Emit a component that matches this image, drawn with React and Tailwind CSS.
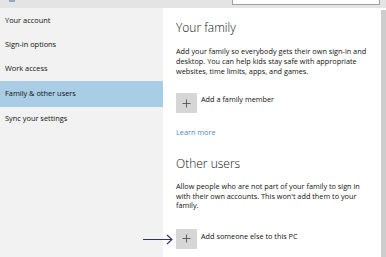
import React from "react";

const navItems = [
  "Your account",
  "Sign-in options",
  "Work access",
  "Family & other users",
  "Sync your settings",
];

const PlusTile = () => (
  <div className="w-[21px] h-[20px] bg-[#d6d6d6] flex items-center justify-center shrink-0">
    <svg width="9" height="9" viewBox="0 0 9 9">
      <path d="M4.5 0.5v8M0.5 4.5h8" stroke="#555" strokeWidth="0.9" fill="none" />
    </svg>
  </div>
);

const App = () => {
  return (
    <div
      className="relative w-[386px] h-[257px] overflow-hidden bg-white text-[#111]"
      style={{ fontFamily: '"Open Sans", "Noto Sans", sans-serif' }}
    >
      {/* top strip with search box */}
      <div className="h-[8px] bg-[#e4e4e4] flex items-start">
        <div className="ml-[9px] w-[6px] h-[2px] bg-[#8fa9c4]" />
        <div className="ml-[217px] w-[148px] h-[5px] bg-white border border-t-0 border-[#a0a0a0]" />
      </div>

      <div className="flex h-[249px]">
        {/* sidebar */}
        <div className="w-[163px] bg-[#f2f2f2] pt-[1px] flex flex-col">
          {navItems.map((item, i) => (
            <div
              key={item}
              className={`flex items-center pl-[5px] text-[7.4px] ${
                i === 3 ? "h-[26px] bg-[#a8cde5]" : "h-[24px]"
              }`}
            >
              {item}
            </div>
          ))}
        </div>

        {/* content */}
        <div className="flex-1 pl-[13px] pt-[12px] flex flex-col">
          <h2 className="text-[12px] leading-[16px] font-light">Your family</h2>
          <p className="mt-[10px] text-[7.3px] leading-[10px] whitespace-nowrap">
            <span className="block">Add your family so everybody gets their own sign-in and</span>
            <span className="block">desktop. You can help kids stay safe with appropriate</span>
            <span className="block">websites, time limits, apps, and games.</span>
          </p>
          <div className="mt-[17px] flex items-start gap-[4px]">
            <PlusTile />
            <span className="text-[7.3px] leading-[10px] mt-[1px]">Add a family member</span>
          </div>
          <a className="mt-[14px] text-[7.3px] leading-[10px] text-[#4f87c2]">Learn more</a>

          <h2 className="mt-[19px] text-[12px] leading-[16px] font-light">Other users</h2>
          <p className="mt-[10px] text-[7.3px] leading-[9.5px] whitespace-nowrap">
            <span className="block">Allow people who are not part of your family to sign in</span>
            <span className="block">with their own accounts. This won't add them to your</span>
            <span className="block">family.</span>
          </p>
          <div className="mt-[18px] flex items-start gap-[4px]">
            <PlusTile />
            <span className="text-[7.3px] leading-[10px] mt-[2px]">Add someone else to this PC</span>
          </div>
        </div>

        {/* scrollbar */}
        <div className="w-[5px] mt-[2px] bg-[#cdcdcd]" />
      </div>

      {/* annotation arrow */}
      <svg className="absolute left-[142px] top-[233px]" width="32" height="12" viewBox="0 0 32 12">
        <path d="M1 6.5h29M25 2l5 4.5-5 4.5" stroke="#2e2f7d" strokeWidth="1.1" fill="none" />
      </svg>
    </div>
  );
};

export default App;
